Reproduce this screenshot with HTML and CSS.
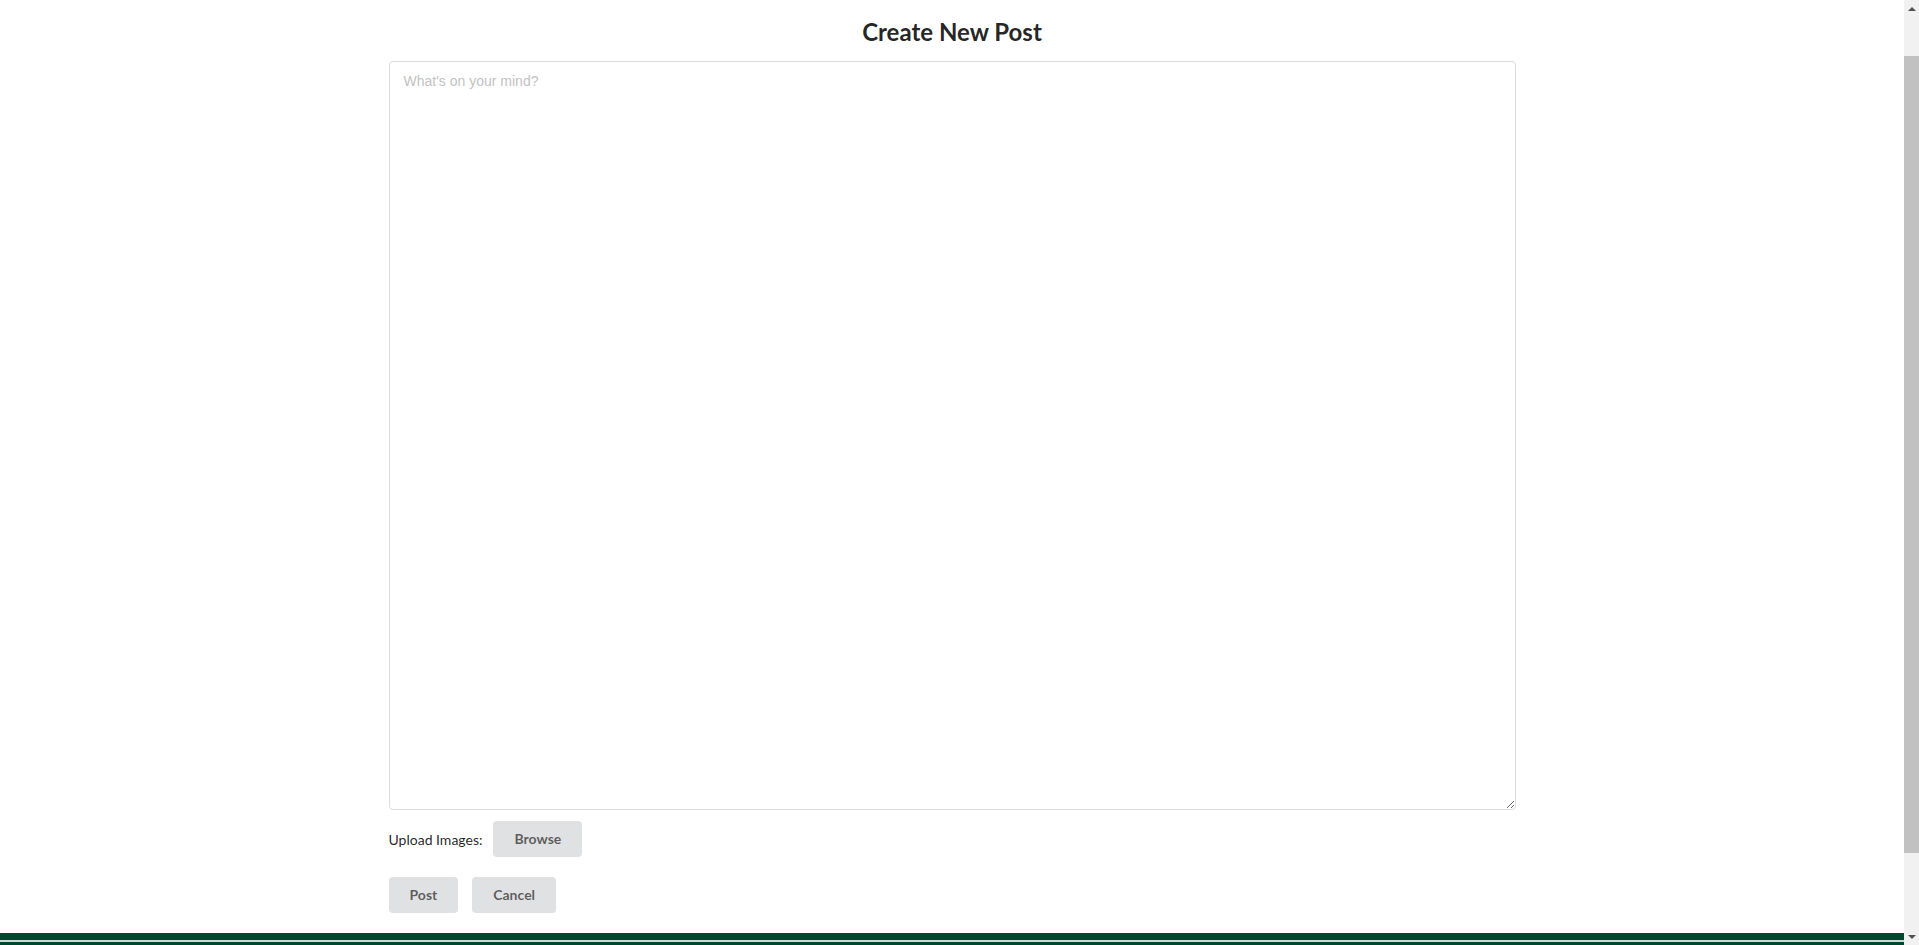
FILE: index.html
```html
<!DOCTYPE html>
<html lang="en">
<head>
<meta charset="utf-8">
<title>Create New Post</title>
<link rel="stylesheet" href="styles.css">
</head>
<body>
<main class="page">
  <div class="container">
    <h2 class="title">Create New Post</h2>
    <form class="post-form">
      <textarea class="post-text" placeholder="What's on your mind?"></textarea>
      <div class="upload-row">
        <span class="upload-label">Upload Images:</span>
        <button type="button" class="btn">Browse</button>
      </div>
      <div class="actions">
        <button type="button" class="btn">Post</button>
        <button type="button" class="btn">Cancel</button>
      </div>
    </form>
  </div>
</main>
<footer class="footer">
  <div class="footer-inner"></div>
</footer>
<div class="scrollbar" aria-hidden="true">
  <div class="sb-arrow sb-up"></div>
  <div class="sb-track"><div class="sb-thumb"></div></div>
  <div class="sb-arrow sb-down"></div>
</div>
<script src="script.js"></script>
</body>
</html>
```

FILE: styles.css
```css
html, body {
  margin: 0;
  padding: 0;
  background: #ffffff;
}
body {
  font-family: Lato, "Helvetica Neue", Arial, sans-serif;
  font-size: 14px;
  color: rgba(0, 0, 0, 0.87);
  padding-right: 15px;
}
.page {
  padding-top: 64px;
}
.container {
  width: 1127px;
  margin: 0 auto;
}
.title {
  margin: 0 0 14px;
  font-size: 24px;
  line-height: 31px;
  font-weight: 700;
  text-align: center;
  color: rgba(0, 0, 0, 0.87);
}
.post-form {
  display: flex;
  flex-direction: column;
}
.post-text {
  box-sizing: border-box;
  display: block;
  width: 100%;
  height: 749px;
  margin: 0;
  padding: 11px 14px;
  border: 1px solid #dcdcdd;
  border-radius: 4px;
  font-family: "Liberation Sans", Arial, sans-serif;
  font-size: 14px;
  line-height: 17px;
  color: rgba(0, 0, 0, 0.87);
  outline: none;
  resize: both;
}
.post-text::placeholder {
  color: #c2c2c2;
}
.upload-row {
  display: flex;
  align-items: center;
  gap: 11px;
  margin-top: 11px;
}
.upload-label {
  font-size: 14px;
}
.actions {
  display: flex;
  gap: 14px;
  margin-top: 20px;
}
.btn {
  font-family: Lato, "Helvetica Neue", Arial, sans-serif;
  font-size: 14px;
  font-weight: 700;
  line-height: 14px;
  padding: 11px 21px;
  border: none;
  border-radius: 4px;
  background: #e0e1e2;
  color: rgba(0, 0, 0, 0.6);
  cursor: pointer;
}
.footer {
  margin-top: 20px;
  height: 124px;
  box-sizing: border-box;
  padding-top: 7px;
  background: #004730;
}
.footer-inner {
  border-top: 2px solid #d3d6d5;
}
.scrollbar {
  position: fixed;
  top: 0;
  right: 0;
  width: 15px;
  height: 100vh;
  background: #f1f1f1;
  display: flex;
  flex-direction: column;
}
.sb-arrow {
  height: 17px;
  display: flex;
  align-items: center;
  justify-content: center;
}
.sb-up::before,
.sb-down::before {
  content: "";
  width: 0;
  height: 0;
  border-left: 4px solid transparent;
  border-right: 4px solid transparent;
}
.sb-up::before {
  border-bottom: 4px solid #505050;
}
.sb-down::before {
  border-top: 4px solid #505050;
}
.sb-track {
  flex: 1;
  padding-top: 39px;
  padding-bottom: 75px;
  display: flex;
  justify-content: center;
}
.sb-thumb {
  width: 11px;
  flex: 1;
  background: #c1c1c1;
}
```

FILE: script.js
```js
window.addEventListener('load', function () {
  window.scrollTo(0, 48);
});
window.scrollTo(0, 48);
```
